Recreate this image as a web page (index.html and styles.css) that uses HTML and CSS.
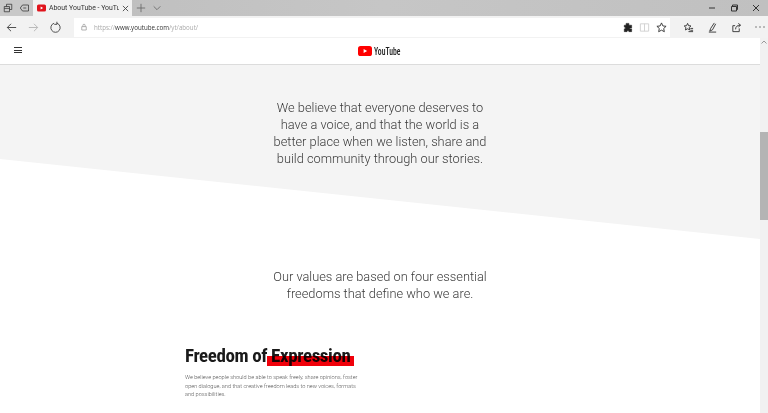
FILE: index.html
```html
<!DOCTYPE html>
<html lang="en">
<head>
<meta charset="utf-8">
<title>About YouTube</title>
<link rel="stylesheet" href="styles.css">
</head>
<body>
<div class="tabbar">
  <div class="tab-tools">
    <svg class="ico16" viewBox="0 0 16 16"><path d="M3 6h7v7H3zM6 6V3h7v7h-3M3 8.500h7" /></svg>
    <svg class="ico16" viewBox="0 0 16 16"><path d="M6 4h8v8H6M6 4 3 8l3 4M7 8h4" /></svg>
  </div>
  <div class="tab">
    <svg class="fav" viewBox="0 0 10 8"><rect width="10" height="8" rx="1.800" fill="#e0141c"/><path d="M4 2.300 6.800 4 4 5.700z" fill="#fff"/></svg>
    <span class="tab-title">About YouTube - YouTu</span>
    <svg class="tab-x" viewBox="0 0 8 8"><path d="M1 1l6 6M7 1 1 7"/></svg>
  </div>
  <div class="tab-new">
    <svg class="ico12" viewBox="0 0 12 12"><path d="M6 1v10M1 6h10"/></svg>
    <svg class="ico12" viewBox="0 0 12 12"><path d="M2 4l4 4 4-4"/></svg>
  </div>
  <div class="win">
    <svg class="ico10" viewBox="0 0 10 10"><path d="M2 5h6"/></svg>
    <svg class="ico10" viewBox="0 0 10 10"><path d="M2.500 3.500h5v4.500h-5zM3.500 3.500V2h5v4.500H8" /></svg>
    <svg class="ico10" viewBox="0 0 10 10"><path d="M2 2l6 6M8 2 2 8"/></svg>
  </div>
</div>
<div class="navbar">
  <div class="nav-btns">
    <svg class="ico14" viewBox="0 0 14 14"><path d="M12 7H2.500M6.500 3 2.500 7l4 4"/></svg>
    <svg class="ico14 dim" viewBox="0 0 14 14"><path d="M2 7h9.500M7.500 3l4 4-4 4"/></svg>
    <svg class="ico14" viewBox="0 0 14 14"><path d="M8.500 2.400a5 5 0 1 1-3 0M8.500 .8v2.800h-2.800"/></svg>
  </div>
  <div class="url">
    <svg class="lock" viewBox="0 0 8 10"><path d="M1 4.500h6V9H1zM2.500 4.500V2.800a1.500 1.500 0 0 1 3 0v1.700"/></svg>
    <span class="url-text"><span class="url-dim">https://</span>www.youtube.com<span class="url-dim">/yt/about/</span></span>
    <div class="url-icons">
      <svg class="ico12 dark" viewBox="0 0 12 12"><path d="M4.500 1.500h3v2h3v3h-2v1h2v3h-3v-1h-2v1h-3v-3h1v-2h-1v-2h2z" fill="#222"/></svg>
      <svg class="ico12 faint" viewBox="0 0 12 12"><path d="M1.500 2h9v8h-9zM6 2v8"/></svg>
      <svg class="ico12" viewBox="0 0 12 12"><path d="M6 1l1.500 3.300 3.500.4-2.600 2.400.7 3.500L6 8.900l-3.100 1.700.7-3.500L1 4.700l3.500-.4z"/></svg>
    </div>
  </div>
  <div class="nav-tools">
    <svg class="ico12" viewBox="0 0 12 12"><path d="M5 1.500l1.100 2.500 2.600.3-1.900 1.800.5 2.600L5 7.400 2.700 8.700l.5-2.600L1.300 4.300l2.600-.3zM8 7h3M8 9h3M6 10.500h5"/></svg>
    <svg class="ico12" viewBox="0 0 12 12"><path d="M8 1 4 7 3 10l3-1.500L9.500 2M2 11h8"/></svg>
    <svg class="ico12" viewBox="0 0 12 12"><path d="M4.500 4H2v6.500h7V7M5 8c0-3 2-4.500 5-4.500M8 1.500l2.500 2L8 5.500"/></svg>
    <svg class="more" viewBox="0 0 10 2"><circle cx="1" cy="1" r=".7"/><circle cx="5" cy="1" r=".7"/><circle cx="9" cy="1" r=".7"/></svg>
  </div>
</div>
<div class="viewport">
  <div class="page">
    <header class="site-head">
      <div class="burger"><span></span><span></span><span></span></div>
      <div class="logo">
        <svg class="logo-mark" viewBox="0 0 14 10"><rect width="14" height="10" rx="2.600" fill="#f00"/><path d="M5.600 2.900 9.200 5 5.600 7.100z" fill="#fff"/></svg>
        <span class="logo-text">YouTube</span>
      </div>
    </header>
    <section class="hero">
      <p class="lede">We believe that everyone deserves to<br>have a voice, and that the world is a<br>better place when we listen, share and<br>build community through our stories.</p>
    </section>
    <section class="values">
      <p class="lede">Our values are based on four essential<br>freedoms that define who we are.</p>
    </section>
    <section class="freedom">
      <h2 class="freedom-title">Freedom of <span class="mark">Expression</span></h2>
      <p class="freedom-body">We believe people should be able to speak freely, share opinions, foster open dialogue, and that creative freedom leads to new voices, formats and possibilities.</p>
    </section>
  </div>
  <div class="scrollbar">
    <svg class="scroll-up" viewBox="0 0 6 4"><path d="M.5 3.500 3 1l2.500 2.500"/></svg>
    <div class="thumb"></div>
  </div>
</div>
</body>
</html>
```
FILE: styles.css
```css
html, body { margin: 0; padding: 0; height: 413px; overflow: hidden; background: #fff; font-family: Roboto, "Liberation Sans", sans-serif; }
svg { display: block; flex: none; fill: none; stroke: #333; stroke-width: 1; }
.ico16 { width: 12px; height: 12px; }
.ico14 { width: 13px; height: 13px; stroke: #444; }
.ico12 { width: 11px; height: 11px; }
.ico10 { width: 10px; height: 10px; }
.dim { stroke: #b5b5b5; }
.dark { stroke: #222; stroke-width: .6; }
.faint { stroke: #d0d0d0; }

.tabbar { height: 16px; background: linear-gradient(90deg, #bdbdbd, #c6c6c6 50%, #c0c0c0); display: flex; align-items: center; }
.tab-tools { width: 33px; display: flex; gap: 4px; padding-left: 2px; box-sizing: border-box; background: #c8c8c8; height: 16px; align-items: center; }
.tab { width: 99px; height: 16px; background: #f2f2f2; display: flex; align-items: center; padding-left: 4px; box-sizing: border-box; }
.fav { width: 9px; height: 8px; stroke: none; margin-right: 3px; }
.tab-title { font-size: 6.900px; color: #333; white-space: nowrap; width: 70px; overflow: hidden; font-family: Roboto, sans-serif; }
.tab-x { width: 7px; height: 7px; margin-left: 3px; stroke: #444; }
.tab-new { display: flex; gap: 6px; padding-left: 4px; align-items: center; }
.tab-new svg { stroke: #666; width: 10px; height: 10px; }
.win { margin-left: auto; display: flex; gap: 12px; padding-right: 7px; }

.navbar { height: 22px; background: #f2f2f2; display: flex; align-items: center; }
.nav-btns { width: 74px; display: flex; gap: 9px; padding-left: 5px; box-sizing: border-box; }
.url { width: 596px; height: 19px; background: #fff; display: flex; align-items: center; padding-left: 7px; box-sizing: border-box; }
.lock { width: 6px; height: 8px; stroke: #999; margin-right: 7px; }
.url-text { font-size: 6.200px; color: #333; font-weight: 500; white-space: nowrap; font-family: "Open Sans", sans-serif; }
.url-dim { color: #aaa; font-weight: 400; }
.url-icons { margin-left: auto; display: flex; gap: 6px; padding-right: 3px; }
.nav-tools { flex: 1; display: flex; align-items: center; gap: 13px; padding-left: 13px; }
.more { width: 10px; height: 2px; stroke: none; fill: #555; }

.viewport { display: flex; height: 375px; overflow: hidden; }
.page { flex: 1; min-width: 0; position: relative; }
.scrollbar { width: 8px; background: #f1f1f1; padding-top: 2px; box-sizing: border-box; }
.scroll-up { width: 6px; height: 4px; margin: 0 auto 88px; stroke: #999; }
.thumb { height: 88px; background: #b4b4b4; }

.site-head { height: 26px; background: #fff; border-bottom: 1px solid #dcdcdc; display: flex; align-items: center; justify-content: center; position: relative; }
.burger { position: absolute; left: 14px; top: 9px; display: flex; flex-direction: column; gap: 1.500px; }
.burger span { display: block; width: 8px; height: 1px; background: #333; }
.logo { display: flex; align-items: center; gap: 2px; width: 44px; margin-right: 1px; }
.logo-mark { width: 14px; height: 10px; stroke: none; }
.logo-text { font-size: 11px; font-weight: 500; font-stretch: condensed; color: #212121; transform: scaleX(.7); transform-origin: left; white-space: nowrap; }

.hero { height: 174px; background: #f4f4f4; clip-path: polygon(0 0, 100% 0, 100% 100%, 0 54%); box-sizing: border-box; padding-top: 34px; }
.lede { margin: 0; text-align: center; font-weight: 300; font-size: 12.800px; line-height: 17px; color: #3a3a3a; white-space: nowrap; }
.values { padding-top: 29px; }
.freedom { width: 176px; margin: 0 0 0 185px; padding-top: 42px; }
.freedom-title { margin: 0; font-size: 19px; letter-spacing: -.4px; line-height: 24px; font-weight: 700; color: #1a1a1a; white-space: nowrap; font-stretch: condensed; }
.mark { position: relative; }
.mark::after { content: ""; position: absolute; left: -4px; right: -3px; top: 12px; height: 10px; background: #f0000a; mix-blend-mode: multiply; }
.freedom-body { margin: 5px 0 0; font-size: 5.600px; line-height: 8.700px; font-weight: 300; color: #555; }
```
